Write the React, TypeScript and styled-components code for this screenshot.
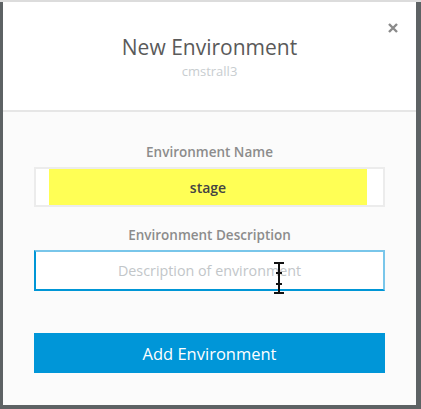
import React from 'react';
import styled, { createGlobalStyle } from 'styled-components';

const GlobalStyle = createGlobalStyle`
    html, body {
        margin: 0;
        padding: 0;
        background: #5d6264;
        font-family: 'Open Sans', 'Liberation Sans', sans-serif;
    }
`;

const Backdrop = styled.div`
    width: 421px;
    height: 409px;
    padding: 0 5px 4px 3px;
    box-sizing: border-box;
    border-top: 2px solid #dcdcdc;
`;

const Modal = styled.div`
    position: relative;
    height: 100%;
    background: #fbfbfb;
    display: flex;
    flex-direction: column;
`;

const Header = styled.div`
    background: #fff;
    height: 110px;
    border-bottom: 2px solid #e6e6e6;
    display: flex;
    flex-direction: column;
    align-items: center;
    padding-top: 31px;
    box-sizing: border-box;
`;

const Title = styled.h2`
    margin: 0;
    font-size: 21px;
    font-weight: 400;
    color: #5a5a5a;
    line-height: 28px;
`;

const Subtitle = styled.div`
    font-size: 13px;
    line-height: 16px;
    color: #c8cdd0;
    margin-top: 2px;
`;

const Close = styled.button`
    position: absolute;
    top: 20px;
    right: 17px;
    border: none;
    background: none;
    padding: 0;
    width: 12px;
    height: 12px;
    cursor: pointer;
`;

const Body = styled.form`
    display: flex;
    flex-direction: column;
    padding: 32px 31px 0;
`;

const Label = styled.label`
    text-align: center;
    font-size: 13.5px;
    font-weight: 600;
    color: #8c8c8c;
    line-height: 17px;
`;

const Field = styled.div<{ $focused?: boolean }>`
    position: relative;
    margin-top: 6px;
    height: ${p => (p.$focused ? 41 : 40)}px;
    box-sizing: border-box;
    background: #fff;
    border: 2px solid ${p => (p.$focused ? '#79c6ea' : '#ececec')};
    border-bottom-color: ${p => (p.$focused ? '#0096d6' : '#ececec')};
    border-left-color: ${p => (p.$focused ? '#0096d6' : '#ececec')};
    display: flex;
    justify-content: center;
    align-items: stretch;
    padding: ${p => (p.$focused ? '0' : '0 16px 0 13px')};
`;

const Highlight = styled.div`
    flex: 1;
    background: #ffff55;
    display: flex;
    align-items: center;
    justify-content: center;
    font-size: 14px;
    font-weight: 600;
    color: #444;
`;

const Input = styled.input`
    flex: 1;
    border: none;
    outline: none;
    background: transparent;
    text-align: center;
    font-family: inherit;
    font-size: 14.3px;
    color: #444;
    &::placeholder {
        color: #c2c6c9;
    }
`;

const Gap = styled.div<{ $h: number }>`
    height: ${p => p.$h}px;
`;

const Cursor = styled.svg`
    position: absolute;
    left: 237px;
    top: 10px;
`;

const Submit = styled.button`
    height: 40px;
    border: none;
    background: #0096d8;
    color: #fff;
    font-family: inherit;
    font-size: 16.5px;
    cursor: pointer;
`;

export default function App() {
    return (
        <>
            <GlobalStyle />
            <Backdrop>
                <Modal>
                    <Header>
                        <Title>New Environment</Title>
                        <Subtitle>cmstrall3</Subtitle>
                        <Close aria-label='close'>
                            <svg width='12' height='12' viewBox='0 0 12 12'>
                                <path d='M2 2 L10 10 M10 2 L2 10' stroke='#8a8a8a' strokeWidth='2.4' />
                            </svg>
                        </Close>
                    </Header>
                    <Body>
                        <Label>Environment Name</Label>
                        <Field>
                            <Highlight>stage</Highlight>
                        </Field>
                        <Gap $h={20} />
                        <Label>Environment Description</Label>
                        <Field $focused>
                            <Input placeholder='Description of environment' />
                            <Cursor width='12' height='32' viewBox='0 0 12 32'>
                                <path d='M1 1 H11 M6 1 V31 M1 31 H11 M3 11 H9 M3 22 H9' stroke='#111' strokeWidth='2' fill='none' />
                            </Cursor>
                        </Field>
                        <Gap $h={42} />
                        <Submit type='button'>Add Environment</Submit>
                    </Body>
                </Modal>
            </Backdrop>
        </>
    );
}
